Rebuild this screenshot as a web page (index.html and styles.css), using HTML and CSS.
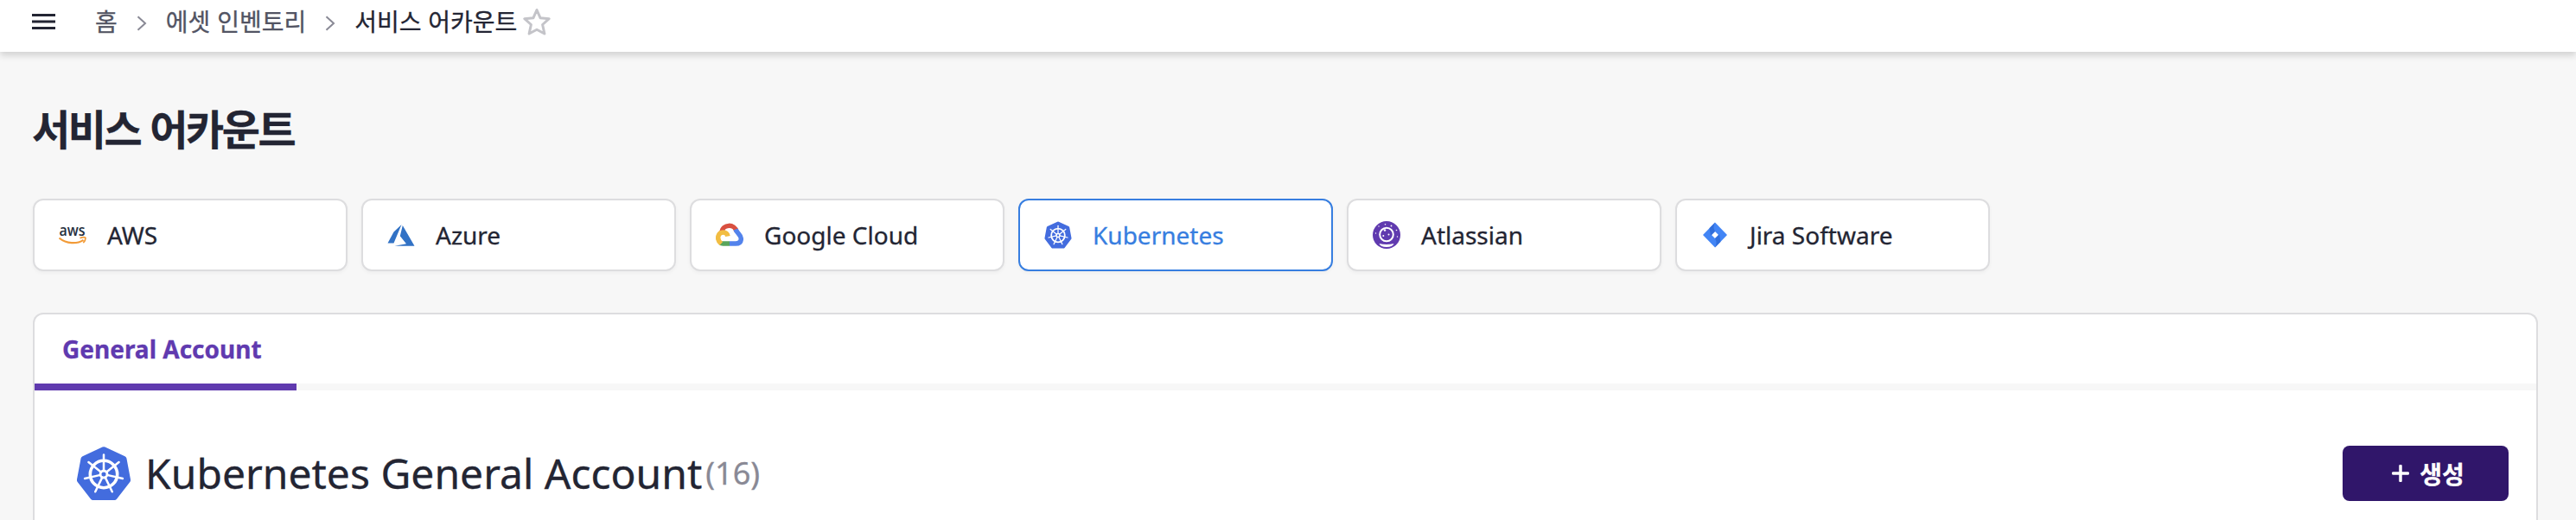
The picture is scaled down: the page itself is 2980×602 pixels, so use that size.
FILE: index.html
```html
<!DOCTYPE html>
<html lang="ko">
<head>
<meta charset="utf-8">
<title>서비스 어카운트</title>
<link rel="stylesheet" href="styles.css">
</head>
<body>
<svg class="defs" width="0" height="0" aria-hidden="true">
  <symbol id="kubernetes" viewBox="0 0 64 64">
    <path d="M30.500 1.500Q32 0.800 33.500 1.500L56.500 12.200Q58 13 58.400 14.500L63 39Q63.300 40.500 62.500 41.700L47 61.800Q46 63 44.500 63H19.500Q18 63 17 61.800L1.500 41.700Q.7 40.500 1 39L5.600 14.500Q6 13 7.500 12.200Z" fill="#436cde"/>
    <g stroke="#fff" fill="none" stroke-linecap="round">
      <circle cx="32" cy="33" r="15.700" stroke-width="3.600"/>
      <g stroke-width="2.500">
        <path id="spoke" d="M32 29V10.500"/>
        <use href="#spoke" transform="rotate(51.430 32 33)"/>
        <use href="#spoke" transform="rotate(102.860 32 33)"/>
        <use href="#spoke" transform="rotate(154.290 32 33)"/>
        <use href="#spoke" transform="rotate(205.710 32 33)"/>
        <use href="#spoke" transform="rotate(257.140 32 33)"/>
        <use href="#spoke" transform="rotate(308.570 32 33)"/>
      </g>
      <circle cx="32" cy="33" r="4" stroke-width="2.800"/>
    </g>
  </symbol>
</svg>
<header class="topbar">
  <svg class="menu" viewBox="0 0 27 18"><path d="M0 1.500H27M0 9H27M0 16.500H27" stroke="#232533" stroke-width="3"/></svg>
  <nav class="crumbs">
    <span>홈</span>
    <svg class="chevron" viewBox="0 0 12 18"><path d="M1.500 1.200L10 9L1.500 16.800"/></svg>
    <span>에셋 인벤토리</span>
    <svg class="chevron" viewBox="0 0 12 18"><path d="M1.500 1.200L10 9L1.500 16.800"/></svg>
    <span class="current">서비스 어카운트</span>
  </nav>
  <svg class="star" viewBox="0 0 32 32"><path d="M16 2.500L20 11.700L30.200 12.700L22.600 19.500L24.900 30L16 25.200L7.100 30L9.400 19.500L1.800 12.700L12 11.700Z"/></svg>
</header>
<main class="page">
  <h1 class="title">서비스 어카운트</h1>
  <div class="providers">
    <div class="card">
      <svg class="icon" viewBox="0 0 32 32"><text class="aws" x="0.500" y="16.500" textLength="30" lengthAdjust="spacingAndGlyphs">aws</text><path d="M.5 19.500C9 26.500 21 26.800 28.500 21.800" fill="none" stroke="#f29b38" stroke-width="2.200"/><path d="M24.500 19.600C28 18.300 31 18.500 31 19.500S30 23.500 28.300 25" fill="none" stroke="#f29b38" stroke-width="1.700"/></svg>
      <span>AWS</span>
    </div>
    <div class="card">
      <svg class="icon" viewBox="0 0 32 32"><path d="M16.500 4L7.500 25.500H.5L7.500 12.500ZM17.800 5L31.500 28.700H8.500L22 26.200L14.800 17.200Z" fill="#3272c5"/></svg>
      <span>Azure</span>
    </div>
    <div class="card">
      <svg class="icon" viewBox="0 0 32 32" fill="none" stroke-width="5.500">
        <path d="M7 13C8 3 22 3 24 12" stroke="#d95040"/>
        <path d="M23 9.500C25 15 29.500 15.500 29.300 21C29 25 26 26 23 26H16" stroke="#5383ec"/>
        <path d="M16 26H8.500C7 26 6 25.500 5.500 25" stroke="#58a55c"/>
        <path d="M6.300 26C-.5 20 3.500 13 8.500 13C11.500 13 13.500 15 14 17.500" stroke="#f2bd42"/>
      </svg>
      <span>Google Cloud</span>
    </div>
    <div class="card selected">
      <svg class="icon"><use href="#kubernetes"/></svg>
      <span>Kubernetes</span>
    </div>
    <div class="card">
      <svg class="icon" viewBox="0 0 32 32">
        <circle cx="16" cy="16" r="16" fill="#603aaf"/>
        <circle cx="16" cy="15.500" r="7.800" fill="none" stroke="#fff" stroke-width="2"/>
        <path d="M7.500 26Q16 28 24.500 26Q23 30 16 30T7.500 26Z" fill="#fff"/>
        <g fill="#fff"><circle cx="12.300" cy="17" r="1"/><circle cx="18.500" cy="15.500" r="1"/><circle cx="14" cy="10.500" r="1.300"/><circle cx="14.500" cy="3.700" r=".8"/><circle cx="21.500" cy="5.500" r=".9"/><circle cx="7" cy="6" r=".7"/><circle cx="27.500" cy="10.500" r=".8"/><circle cx="3.500" cy="14" r=".7"/><circle cx="28.500" cy="18" r=".7"/></g>
      </svg>
      <span>Atlassian</span>
    </div>
    <div class="card">
      <svg class="icon" viewBox="0 0 32 32"><path d="M16 1.500L30 16L16 30.500L2 16ZM16 12L12 16L16 20L20 16Z" fill="#4285f5" fill-rule="evenodd"/><path d="M16 1.500Q13 7 16 12L11 17L9.500 8ZM16 20L21 15L22.500 24L16 30.500Q19 25 16 20Z" fill="#2a64d0" opacity=".7"/></svg>
      <span>Jira Software</span>
    </div>
  </div>
  <section class="panel">
    <div class="tabs"><div class="tab">General Account</div></div>
    <div class="heading">
      <svg class="logo"><use href="#kubernetes"/></svg>
      <h2 class="name">Kubernetes General Account</h2>
      <span class="count">(16)</span>
      <button class="create"><svg class="plus" viewBox="0 0 20 20"><path d="M1.500 10H18.500M10 1.500V18.500"/></svg><span>생성</span></button>
    </div>
  </section>
</main>
</body>
</html>
```
FILE: styles.css
```css
* { box-sizing: border-box; }
body {
  margin: 0;
  height: 602px;
  background: #f7f7f7;
  color: #232533;
  font-family: "Noto Sans", "Noto Sans CJK KR", sans-serif;
  font-size: 28px;
  -webkit-text-stroke: .3px currentColor;
}
.defs { position: absolute; }
.topbar {
  display: flex;
  align-items: flex-start;
  height: 60px;
  padding-left: 37px;
  background: #fff;
  box-shadow: 0 4px 8px rgba(0, 0, 0, .16);
}
.menu { width: 27px; height: 18px; margin-top: 16px; }
.crumbs {
  display: flex;
  align-items: center;
  height: 48px;
  margin-left: 46px;
  color: #525463;
  font-family: "Noto Sans CJK KR", sans-serif;
  line-height: 48px;
}
.current { color: #232533; }
.chevron { width: 12px; height: 18px; margin: 6px 22px 0; fill: none; stroke: #898995; stroke-width: 2; }
.star { width: 32px; height: 32px; margin: 9px 0 0 7px; fill: none; stroke: #c4c4c9; stroke-width: 3; stroke-linejoin: round; }
.page { padding: 51px 44px 0 38px; }
.title {
  margin: 0 0 0 -1px;
  height: 72px;
  font: bold 48px/72px "Noto Sans CJK KR", sans-serif;
  letter-spacing: -2.400px;
}
.providers { display: flex; gap: 16px; margin-top: 47px; }
.card {
  display: flex;
  align-items: center;
  gap: 24px;
  width: 364px;
  height: 84px;
  padding-left: 28px;
  border: 2px solid #dddddf;
  border-radius: 12px;
  background: #fff;
  box-shadow: 0 2px 4px rgba(0, 0, 0, .04);
}
.selected { border-color: #377ee0; color: #377ee0; }
.icon { width: 32px; height: 32px; }
.aws { font: 600 18.500px "Open Sans", sans-serif; fill: #252f3e; -webkit-text-stroke: 0; }
.panel {
  height: 240px;
  margin-top: 48px;
  border: 2px solid #dddddf;
  border-bottom: 0;
  border-radius: 12px 12px 0 0;
  background: #fff;
}
.tabs { display: flex; height: 88px; box-shadow: inset 0 -8px #f7f7f7; }
.tab {
  width: 303px;
  padding-left: 32px;
  border-bottom: 8px solid #603aaf;
  color: #603aaf;
  font-weight: bold;
  line-height: 80px;
}
.heading { display: flex; align-items: center; height: 64px; margin: 64px 32px 0 48px; }
.logo { width: 64px; height: 64px; }
.name { margin: 0 0 0 16px; font-size: 48px; font-weight: 400; line-height: 66px; }
.count { margin-left: 4px; color: #898995; font-size: 36px; line-height: 64px; }
.create {
  display: flex;
  align-items: center;
  justify-content: center;
  gap: 12px;
  width: 192px;
  height: 64px;
  margin-left: auto;
  padding: 0 0 0 6px;
  border: 0;
  border-radius: 8px;
  background: #30166a;
  color: #fff;
  font: bold 28px/62px "Noto Sans CJK KR", sans-serif;
}
.plus { width: 20px; height: 20px; fill: none; stroke: #fff; stroke-width: 3.500; stroke-linecap: round; }
```
